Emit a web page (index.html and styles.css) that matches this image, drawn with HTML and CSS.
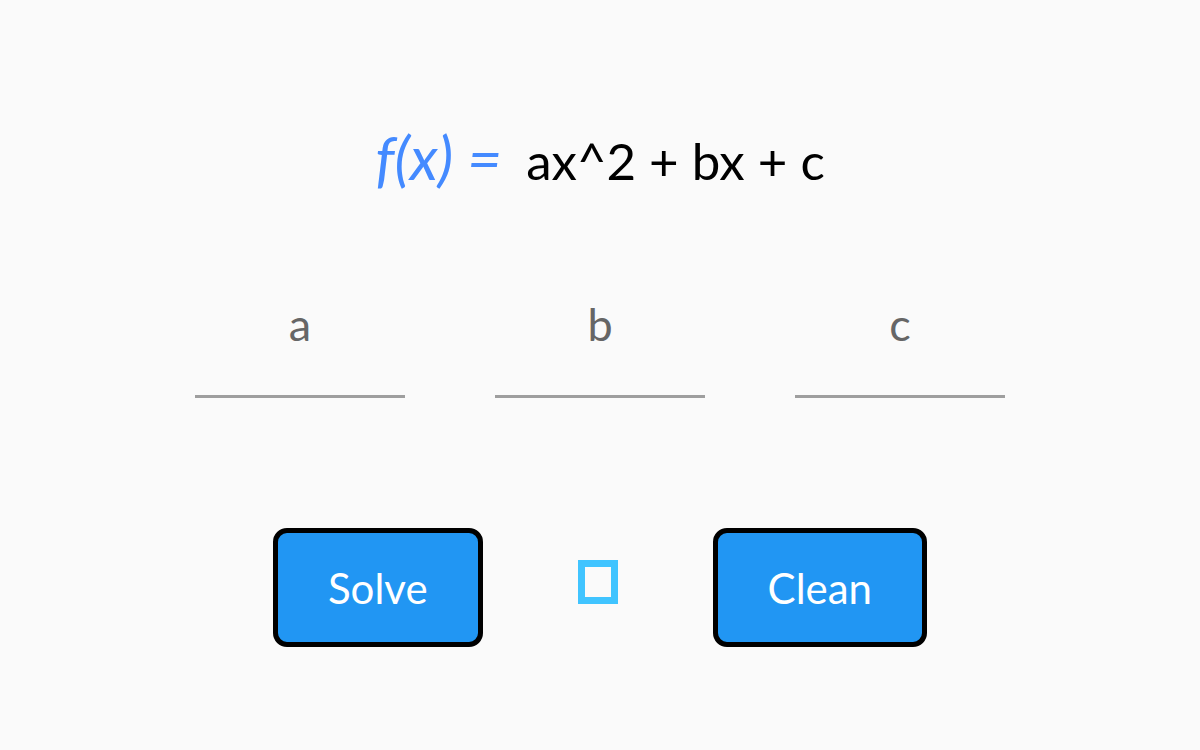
FILE: index.html
```html
<!DOCTYPE html>
<html>
<head>
<meta charset="utf-8">
<link rel="stylesheet" href="styles.css">
</head>
<body>
<div class="page">
  <div class="formula">
    <span class="fx">f(x) =</span>
    <span class="expr">ax^2 + bx + c</span>
  </div>
  <div class="inputs">
    <div class="field"><div class="label">a</div><div class="line"></div></div>
    <div class="field"><div class="label">b</div><div class="line"></div></div>
    <div class="field"><div class="label">c</div><div class="line"></div></div>
  </div>
  <div class="actions">
    <button class="btn">Solve</button>
    <div class="box"></div>
    <button class="btn">Clean</button>
  </div>
</div>
</body>
</html>
```

FILE: styles.css
```css
html, body {
  margin: 0;
  padding: 0;
  background: #fafafa;
  font-family: Lato, "Liberation Sans", sans-serif;
}
.page {
  width: 1200px;
  height: 750px;
  display: flex;
  flex-direction: column;
  align-items: center;
}
.formula {
  margin-top: 124px;
  height: 66px;
  display: flex;
  align-items: baseline;
  gap: 24px;
  line-height: 66px;
}
.fx {
  color: #448aff;
  font-style: italic;
  font-size: 60px;
}
.expr {
  color: #000;
  font-size: 51px;
}
.inputs {
  margin-top: 104px;
  display: flex;
  gap: 90px;
}
.field {
  width: 210px;
  display: flex;
  flex-direction: column;
  align-items: center;
}
.label {
  font-size: 45px;
  line-height: 60px;
  color: #666;
  height: 60px;
}
.line {
  margin-top: 41px;
  width: 100%;
  height: 3px;
  background: #9e9e9e;
}
.actions {
  margin-top: 130px;
  display: flex;
  align-items: center;
  gap: 95px;
}
.btn {
  font-family: Lato, "Liberation Sans", sans-serif;
  font-size: 42px;
  color: #fff;
  background: #2196f3;
  border: 5px solid #000;
  border-radius: 14px;
  height: 119px;
  padding: 0 50px;
}
.box {
  width: 26px;
  height: 30px;
  border: 7px solid #40c4ff;
  margin-top: -12px;
}
```
